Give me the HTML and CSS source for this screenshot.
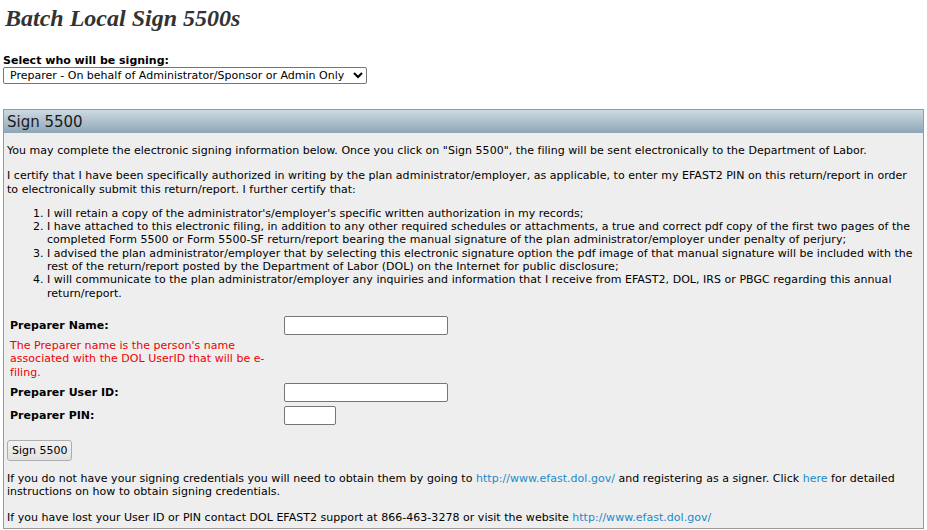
FILE: index.html
```html
<!DOCTYPE html>
<html lang="en">
<head>
    <meta charset="UTF-8">
    <title>Batch Local Sign 5500s</title>
    <link rel="stylesheet" href="styles.css">
</head>
<body>
    <h1 class="page-title">Batch Local Sign 5500s</h1>

    <div class="signer-select">
        <label for="signer" class="signer-label">Select who will be signing:</label>
        <select id="signer" class="signer-dropdown">
            <option>Preparer - On behalf of Administrator/Sponsor or Admin Only</option>
            <option>Administrator/Sponsor</option>
        </select>
    </div>

    <div class="panel">
        <div class="panel-header">Sign 5500</div>
        <div class="panel-body">
            <p class="intro">You may complete the electronic signing information below. Once you click on "Sign 5500", the filing will be sent electronically to the Department of Labor.</p>
            <p class="certify">I certify that I have been specifically authorized in writing by the plan administrator/employer, as applicable, to enter my EFAST2 PIN on this return/report in order to electronically submit this return/report. I further certify that:</p>
            <ol class="cert-list">
                <li>I will retain a copy of the administrator's/employer's specific written authorization in my records;</li>
                <li>I have attached to this electronic filing, in addition to any other required schedules or attachments, a true and correct pdf copy of the first two pages of the completed Form 5500 or Form 5500-SF return/report bearing the manual signature of the plan administrator/employer under penalty of perjury;</li>
                <li>I advised the plan administrator/employer that by selecting this electronic signature option the pdf image of that manual signature will be included with the rest of the return/report posted by the Department of Labor (DOL) on the Internet for public disclosure;</li>
                <li>I will communicate to the plan administrator/employer any inquiries and information that I receive from EFAST2, DOL, IRS or PBGC regarding this annual return/report.</li>
            </ol>

            <table class="sign-form">
                <tr>
                    <td class="field-label">Preparer Name:</td>
                    <td><input type="text" class="text-input"></td>
                </tr>
                <tr>
                    <td class="field-note">The Preparer name is the person's name associated with the DOL UserID that will be e-filing.</td>
                    <td></td>
                </tr>
                <tr>
                    <td class="field-label">Preparer User ID:</td>
                    <td><input type="text" class="text-input"></td>
                </tr>
                <tr>
                    <td class="field-label">Preparer PIN:</td>
                    <td><input type="password" class="text-input pin-input"></td>
                </tr>
            </table>

            <button class="sign-button">Sign 5500</button>

            <p class="help">If you do not have your signing credentials you will need to obtain them by going to <a href="#">http://www.efast.dol.gov/</a> and registering as a signer. Click <a href="#">here</a> for detailed instructions on how to obtain signing credentials.</p>
            <p class="last">If you have lost your User ID or PIN contact DOL EFAST2 support at 866-463-3278 or visit the website <a href="#">http://www.efast.dol.gov/</a></p>
        </div>
    </div>
</body>
</html>
```

FILE: styles.css
```css
html, body {
    margin: 0;
    padding: 0;
    background-color: #ffffff;
    color: #000000;
    font-family: "DejaVu Sans", Verdana, sans-serif;
    font-size: 11px;
}

body {
    padding: 0 3px;
}

.page-title {
    margin: 0;
    padding: 4px 0 0 2px;
    font-family: "Liberation Serif", "Times New Roman", serif;
    font-style: italic;
    font-weight: bold;
    font-size: 24px;
    line-height: 28px;
    color: #333333;
}

.signer-select {
    margin-top: 23px;
}

.signer-label {
    display: block;
    font-weight: bold;
    line-height: 12px;
}

.signer-dropdown {
    font-family: "DejaVu Sans", Verdana, sans-serif;
    font-size: 11px;
    height: 17px;
    width: 364px;
    padding: 0 0 0 2px;
    border: 1px solid #767676;
    border-radius: 2px;
    background: #ffffff;
    color: #000000;
}

.panel {
    margin-top: 25px;
    border: 1px solid #999999;
    background-color: #eeeeee;
}

.panel-header {
    height: 23px;
    line-height: 25px;
    padding-left: 3px;
    font-size: 15px;
    color: #1a1a1a;
    background: linear-gradient(to bottom, #cddae3, #8ea6b5);
}

.panel-body {
    padding: 0 6px 3px 3px;
    line-height: 13.3px;
    letter-spacing: 0.03px;
}

.panel-body p {
    margin: 0;
}

.panel-body p.intro {
    margin-top: 11px;
}

.panel-body p.certify {
    margin-top: 12px;
}

.cert-list {
    margin: 11px 0 0 0;
    padding-left: 40px;
}

.sign-form {
    border-collapse: separate;
    border-spacing: 0;
    margin-top: 14px;
}

.sign-form td {
    padding: 2px 3px;
    vertical-align: middle;
}

.field-label {
    font-weight: bold;
    width: 268px;
}

.field-note {
    color: #ee0000;
    padding-right: 6px;
}

.text-input {
    display: block;
    width: 164px;
    height: 19px;
    box-sizing: border-box;
    border: 1px solid #767676;
    border-radius: 2px;
    background: #ffffff;
    margin: 0;
}

.pin-input {
    width: 52px;
}

.sign-button {
    display: block;
    margin-top: 13px;
    font-family: "DejaVu Sans", Verdana, sans-serif;
    font-size: 11px;
    height: 21px;
    padding: 0 4px;
    border: 1px solid #adadad;
    border-radius: 3px;
    background: linear-gradient(to bottom, #f2f2f2, #e2e2e2);
    color: #000000;
}

.panel-body p.help {
    margin-top: 11px;
}

.panel-body p.last {
    margin-top: 13px;
}

a {
    color: #1a8acb;
    text-decoration: none;
}
```
